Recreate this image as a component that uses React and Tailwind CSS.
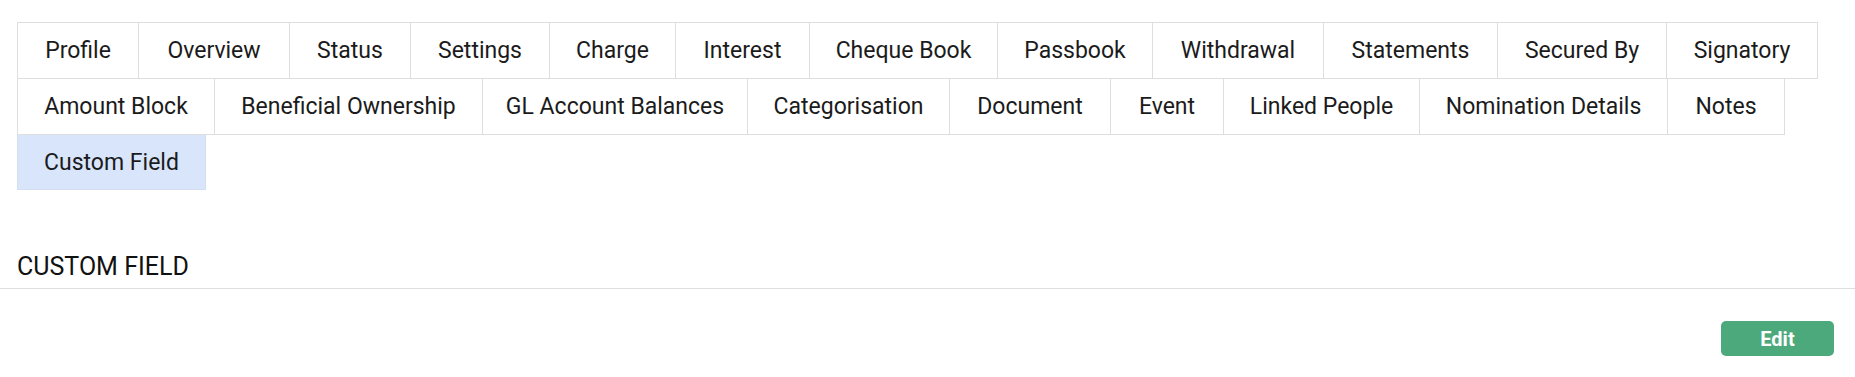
import React from "react";

const tabs = [
  ["Profile", "w-[122px]"],
  ["Overview", "w-[152px]"],
  ["Status", "w-[122px]"],
  ["Settings", "w-[140px]"],
  ["Charge", "w-[127px]"],
  ["Interest", "w-[135px]"],
  ["Cheque Book", "w-[189px]"],
  ["Passbook", "w-[156px]"],
  ["Withdrawal", "w-[172px]"],
  ["Statements", "w-[175px]"],
  ["Secured By", "w-[170px]"],
  ["Signatory", "w-[152px]"],
  ["Amount Block", "w-[198px]"],
  ["Beneficial Ownership", "w-[269px]"],
  ["GL Account Balances", "w-[266px]"],
  ["Categorisation", "w-[203px]"],
  ["Document", "w-[162px]"],
  ["Event", "w-[114px]"],
  ["Linked People", "w-[197px]"],
  ["Nomination Details", "w-[249px]"],
  ["Notes", "w-[118px]"],
];

export default function App() {
  return (
    <div
      className="w-[1855px] min-h-[377px] bg-white text-[#1b1b1b]"
      style={{ fontFamily: "Roboto, 'Noto Sans', sans-serif" }}
    >
      <div className="pt-[22px] pl-[17px] pr-[17px]">
        <div className="flex flex-wrap pt-px pl-px">
          {tabs.map(([label, w]) => (
            <div
              key={label}
              className={`${w} h-[57px] -mt-px -ml-px flex items-center justify-center border border-[#dedede] bg-white text-[23px] leading-none whitespace-nowrap`}
            >
              {label}
            </div>
          ))}
          <div className="w-[189px] h-[56px] -mt-px -ml-px flex items-center justify-center border border-[#d3def0] border-t-[#dedede] bg-[#d8e5fb] text-[23px] leading-none whitespace-nowrap">
            Custom Field
          </div>
        </div>
      </div>

      <div className="mt-[61px] border-b border-[#dedede] pb-[5px] pl-[17px]">
        <h2 className="h-[32px] leading-[32px] text-[25px] font-normal text-[#111] uppercase">
          Custom Field
        </h2>
      </div>

      <div className="flex justify-end pr-[21px] mt-[32px]">
        <button className="w-[113px] h-[35px] rounded-[5px] bg-[#4ca97b] text-white text-[20px] font-bold leading-none flex items-center justify-center">
          Edit
        </button>
      </div>
    </div>
  );
}
